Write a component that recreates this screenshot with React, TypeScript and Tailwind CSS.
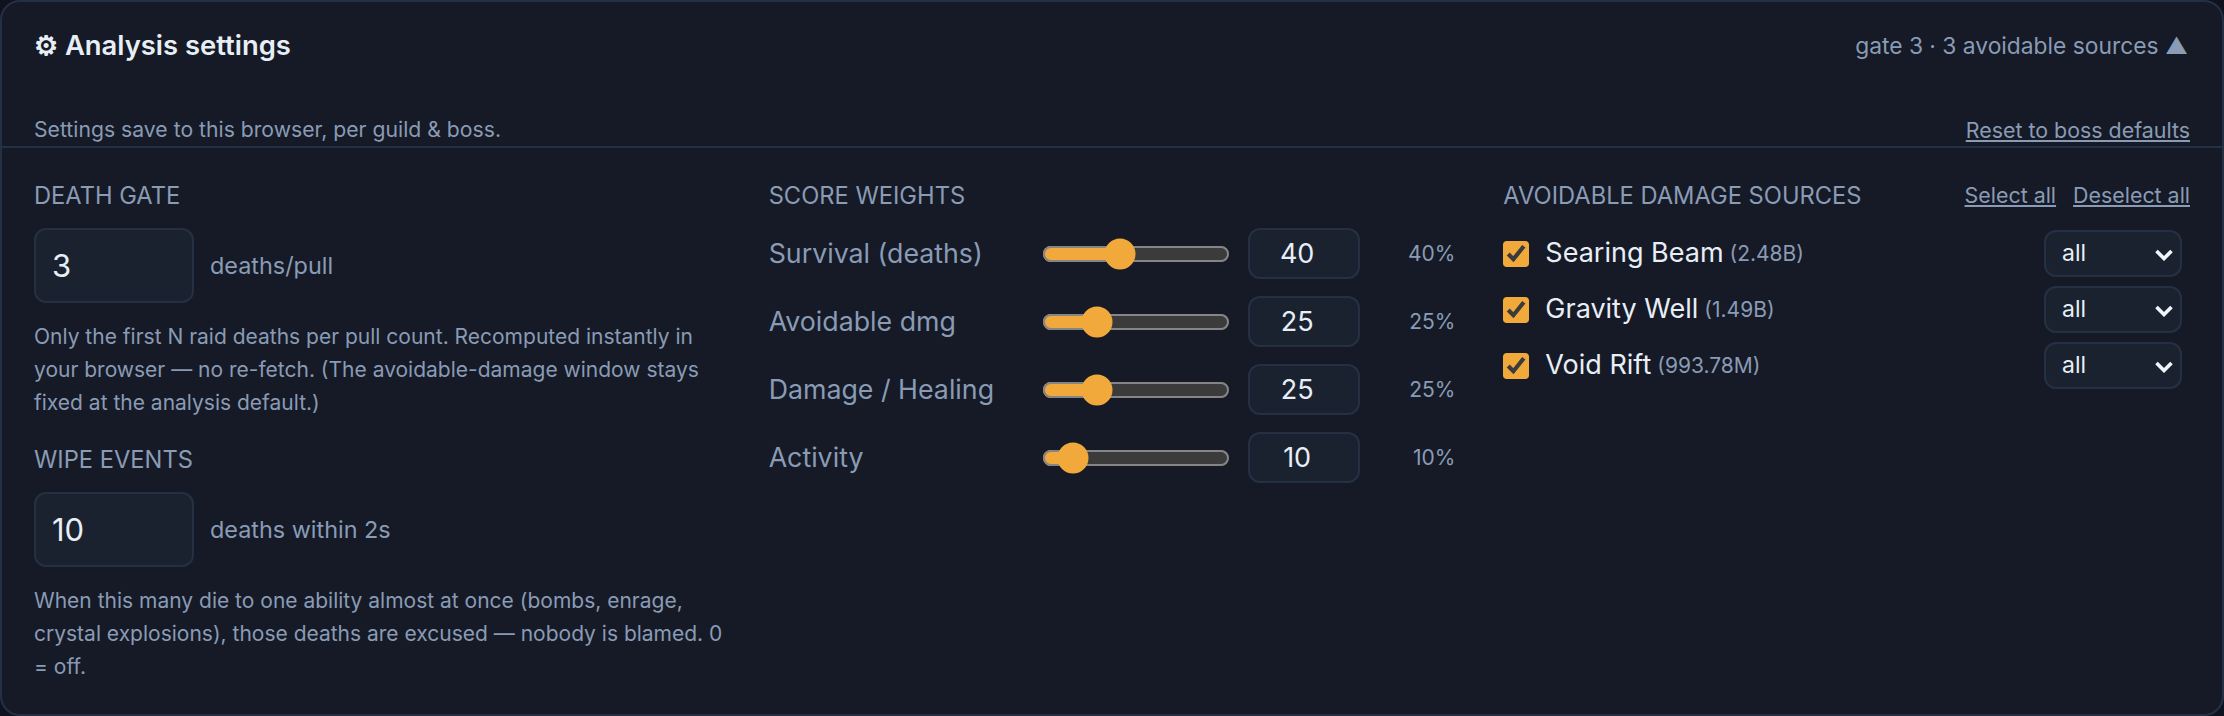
import React from 'react';

const weights = [
  { label: 'Survival (deaths)', value: 40 },
  { label: 'Avoidable dmg', value: 25 },
  { label: 'Damage / Healing', value: 25 },
  { label: 'Activity', value: 10 },
];

const sources = [
  { name: 'Searing Beam', amount: '(2.48B)' },
  { name: 'Gravity Well', amount: '(1.49B)' },
  { name: 'Void Rift', amount: '(993.78M)' },
];

const SectionTitle: React.FC<{ children: React.ReactNode }> = ({ children }) => (
  <h3 className="h-[28px] text-[23.7px] leading-[30px] font-normal uppercase text-[#8a9bb5]">{children}</h3>
);

const GateField: React.FC<{ value: number; unit: string; hint: string }> = ({ value, unit, hint }) => (
  <div>
    <div className="mt-[19px] flex items-center gap-[16px]">
      <input
        type="number"
        defaultValue={value}
        className="h-[75px] w-[160px] rounded-[12px] border-2 border-[#263043] bg-[#1a222f] px-[16px] text-[31px] text-[#e8eef6] outline-none"
      />
      <span className="text-[23.4px] text-[#8a9bb5]">{unit}</span>
    </div>
    <p className="mt-[17px] -mr-[8px] text-[21px] leading-[33px] text-[#8a9bb5]">{hint}</p>
  </div>
);

export default function App() {
  return (
    <div className="h-[716px] bg-[#0f1320]">
      <div className="h-full w-full overflow-hidden rounded-[20px] border-2 border-[#263043] bg-[#151a26] font-['Inter',sans-serif]">
        <div className="border-b-2 border-[#263043] px-[32px] pb-[2px]">
          <div className="mt-[26px] flex h-[36px] items-center justify-between">
            <h2 className="text-[27.4px] font-semibold text-[#e8eef6]">⚙ Analysis settings</h2>
            <span className="mr-[2px] text-[22.8px] text-[#8a9bb5]">gate 3 · 3 avoidable sources ▲</span>
          </div>
          <div className="mt-[52px] flex h-[28px] items-center justify-between text-[21.2px] text-[#8a9bb5]">
            <span>Settings save to this browser, per guild &amp; boss.</span>
            <a className="text-[21.4px] underline">Reset to boss defaults</a>
          </div>
        </div>

        <div className="grid grid-cols-3 gap-x-[48px] px-[32px] pt-[33px]">
          <div>
            <SectionTitle>Death gate</SectionTitle>
            <GateField
              value={3}
              unit="deaths/pull"
              hint="Only the first N raid deaths per pull count. Recomputed instantly in your browser — no re-fetch. (The avoidable-damage window stays fixed at the analysis default.)"
            />
            <div className="mt-[26px]">
              <SectionTitle>Wipe events</SectionTitle>
              <GateField
                value={10}
                unit="deaths within 2s"
                hint="When this many die to one ability almost at once (bombs, enrage, crystal explosions), those deaths are excused — nobody is blamed. 0 = off."
              />
            </div>
          </div>

          <div>
            <SectionTitle>Score weights</SectionTitle>
            <div className="mt-[19px] grid grid-cols-[255px_188px_112px_1fr] items-center gap-x-[18px] gap-y-[17px]">
              {weights.map(w => (
                <React.Fragment key={w.label}>
                  <span className="text-[26.75px] text-[#8a9bb5]">{w.label}</span>
                  <input
                    type="range"
                    min={0}
                    max={100}
                    defaultValue={w.value}
                    className="w-[94px] accent-[#f2a93c] [color-scheme:dark] [zoom:2]"
                  />
                  <input
                    type="number"
                    defaultValue={w.value}
                    className="h-[51px] w-[112px] rounded-[12px] border-2 border-[#263043] bg-[#1a222f] pr-[12px] pl-[14px] text-center text-[27px] text-[#e8eef6] outline-none"
                  />
                  <span className="text-right text-[21px] text-[#8a9bb5]">{w.value}%</span>
                </React.Fragment>
              ))}
            </div>
          </div>

          <div>
            <div className="flex h-[28px] items-center justify-between">
              <SectionTitle>Avoidable damage sources</SectionTitle>
              <div className="flex gap-[17px] text-[21.4px] leading-[28px] text-[#8a9bb5]">
                <a className="underline">Select all</a>
                <a className="underline">Deselect all</a>
              </div>
            </div>
            <div className="mt-[21px] flex flex-col gap-[9px] pr-[8px]">
              {sources.map(s => (
                <div key={s.name} className="flex h-[47px] items-center">
                  <input type="checkbox" defaultChecked className="accent-[#f2a93c] [color-scheme:dark] [zoom:2]" />
                  <span className="ml-[16px] text-[27px] text-[#e8eef6]">{s.name}</span>
                  <span className="ml-[6px] text-[21px] text-[#8a9bb5]">{s.amount}</span>
                  <div className="relative ml-auto">
                    <select
                      defaultValue="all"
                      className="block h-[47px] w-[138px] appearance-none rounded-[12px] border-2 border-[#263043] bg-[#1a222f] px-[16px] text-[23px] text-[#e8eef6]"
                    >
                      <option value="all">all</option>
                    </select>
                    <svg
                      viewBox="0 0 18 12"
                      className="pointer-events-none absolute top-[19px] right-[9px] h-[12px] w-[18px]"
                      fill="none"
                      stroke="#f1f5f9"
                      strokeWidth="3.6"
                    >
                      <path d="M1.5 2 L9 9.5 L16.5 2" />
                    </svg>
                  </div>
                </div>
              ))}
            </div>
          </div>
        </div>
      </div>
    </div>
  );
}
